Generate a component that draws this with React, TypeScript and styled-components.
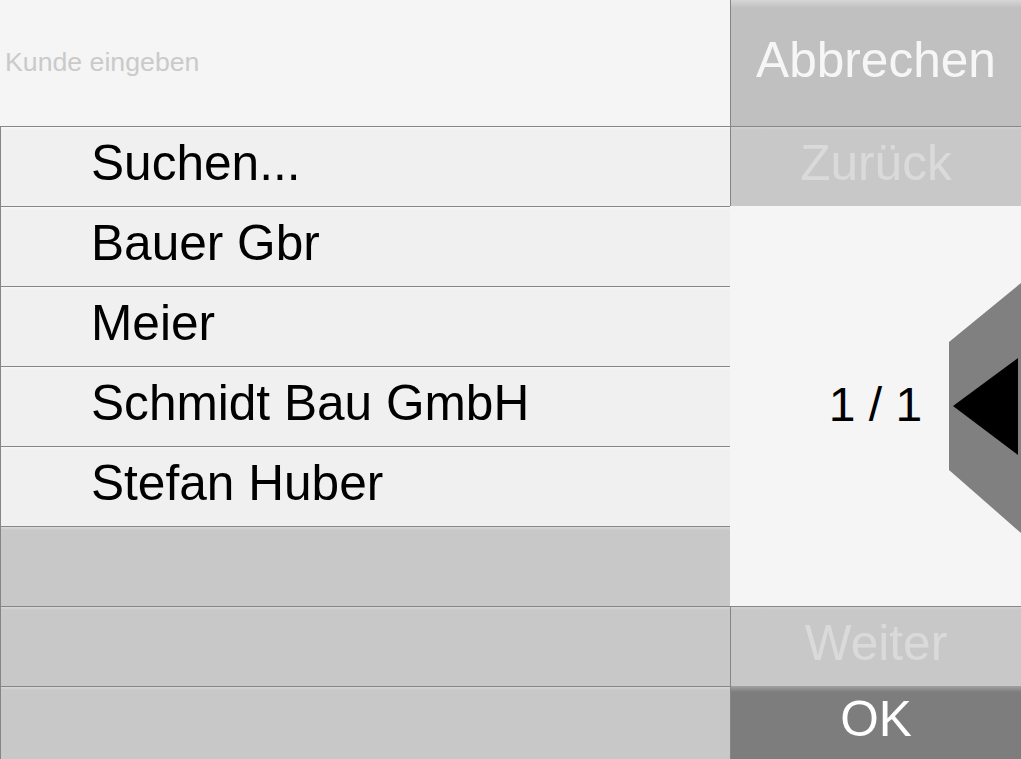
import React from "react";
import styled, { createGlobalStyle } from "styled-components";

const Global = createGlobalStyle`
  html, body { margin: 0; padding: 0; background: #f5f5f5; overflow: hidden; }
  body { font-family: "Liberation Sans", Arial, sans-serif; }
`;

const Screen = styled.div`
  display: grid;
  grid-template-columns: 730px 1fr;
  width: 1021px;
  height: 759px;
  overflow: hidden;
`;

const LeftColumn = styled.div`
  display: flex;
  flex-direction: column;
  min-height: 0;
`;

const SearchField = styled.div`
  height: 127px;
  flex: none;
  display: flex;
  align-items: center;
  padding-left: 5px;
  padding-bottom: 2px;
  box-sizing: border-box;
  background: #f5f5f5;
  border-bottom: 1px solid #878787;
  font-size: 26.7px;
  color: #cacaca;
`;

const ListRow = styled.div<{ $empty?: boolean }>`
  height: 80px;
  flex: none;
  box-sizing: border-box;
  display: flex;
  align-items: center;
  padding-left: 90px;
  padding-bottom: 7px;
  border-left: 1px solid #858585;
  border-bottom: 1px solid #878787;
  background: ${(p) =>
    p.$empty
      ? "linear-gradient(#d8d8d8 0, #c8c8c8 3px)"
      : "linear-gradient(#f8f8f8 0, #f0f0f0 3px)"};
  font-size: 49.6px;
  color: #000;
  white-space: nowrap;
`;

const RightColumn = styled.div`
  display: flex;
  flex-direction: column;
  min-height: 0;
`;

const SideButton = styled.div<{ $h: number; $tone: "cancel" | "disabled" | "ok"; $topBorder?: boolean }>`
  height: ${(p) => p.$h}px;
  flex: none;
  box-sizing: border-box;
  display: flex;
  align-items: center;
  justify-content: center;
  padding-bottom: 7px;
  border-left: 1px solid #858585;
  ${(p) => (p.$topBorder ? "border-top: 1px solid #878787;" : "")}
  ${(p) => (p.$tone === "cancel" ? "border-bottom: 1px solid #878787;" : "")}
  font-size: 49.6px;
  white-space: nowrap;
  background: ${(p) =>
    p.$tone === "cancel"
      ? "linear-gradient(#d6d6d6 0, #c0c0c0 8px)"
      : p.$tone === "ok"
      ? "linear-gradient(#a2a2a2 0, #7d7d7d 6px)"
      : "linear-gradient(#d2d2d2 0, #c8c8c8 3px)"};
  color: ${(p) => (p.$tone === "cancel" ? "#f6f6f6" : p.$tone === "ok" ? "#ffffff" : "#dadada")};
`;

const PagePanel = styled.div`
  flex: 1;
  position: relative;
  display: flex;
  align-items: center;
  justify-content: center;
  padding-bottom: 4px;
  box-sizing: border-box;
  background: #f5f5f5;
  font-size: 48px;
  color: #000;
`;

const BackArrow = styled.svg`
  position: absolute;
  left: 219px;
  top: 0;
  width: 72px;
  height: 400px;
`;

const customers = ["Suchen...", "Bauer Gbr", "Meier", "Schmidt Bau GmbH", "Stefan Huber"];

export default function App() {
  return (
    <>
      <Global />
      <Screen>
        <LeftColumn>
          <SearchField>Kunde eingeben</SearchField>
          {customers.map((c) => (
            <ListRow key={c}>{c}</ListRow>
          ))}
          <ListRow $empty />
          <ListRow $empty />
          <ListRow $empty />
        </LeftColumn>
        <RightColumn>
          <SideButton $h={127} $tone="cancel">Abbrechen</SideButton>
          <SideButton $h={79} $tone="disabled">Zurück</SideButton>
          <PagePanel>
            1 / 1
            <BackArrow viewBox="0 0 72 400">
              <polygon points="0,136 72,77 72,327 0,264" fill="#808080" />
              <polygon points="4,200 69,152 69,249" fill="#000" />
            </BackArrow>
          </PagePanel>
          <SideButton $h={80} $tone="disabled" $topBorder>Weiter</SideButton>
          <SideButton $h={73} $tone="ok">OK</SideButton>
        </RightColumn>
      </Screen>
    </>
  );
}
